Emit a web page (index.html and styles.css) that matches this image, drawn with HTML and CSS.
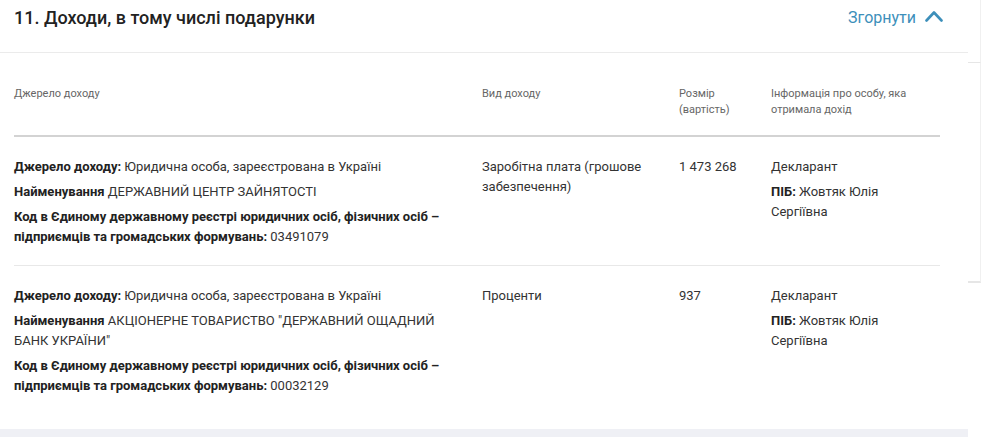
FILE: index.html
```html
<!DOCTYPE html>
<html lang="uk">
<head>
<meta charset="utf-8">
<link rel="stylesheet" href="styles.css">
</head>
<body>
<div class="page">
  <div class="main">
    <section class="card">
      <header class="card-head">
        <h2 class="title">11. Доходи, в тому числі подарунки</h2>
        <a class="toggle">Згорнути
          <svg class="chev" width="18" height="12" viewBox="0 0 18 12"><path d="M1.5 10.5 L9 2.5 L16.5 10.5" fill="none" stroke="currentColor" stroke-width="2.6" stroke-linecap="round" stroke-linejoin="round"/></svg>
        </a>
      </header>
      <div class="table">
        <div class="row thead">
          <div class="c1">Джерело доходу</div>
          <div class="c2">Вид доходу</div>
          <div class="c3">Розмір<br>(вартість)</div>
          <div class="c4">Інформація про особу, яка отримала дохід</div>
        </div>
        <div class="row tbody">
          <div class="c1">
            <p><b>Джерело доходу:</b> Юридична особа, зареєстрована в Україні</p>
            <p><b>Найменування</b> ДЕРЖАВНИЙ ЦЕНТР ЗАЙНЯТОСТІ</p>
            <p><b>Код в Єдиному державному реєстрі юридичних осіб, фізичних осіб – підприємців та громадських формувань:</b> 03491079</p>
          </div>
          <div class="c2"><p>Заробітна плата (грошове забезпечення)</p></div>
          <div class="c3"><p>1 473 268</p></div>
          <div class="c4">
            <p>Декларант</p>
            <p><b>ПІБ:</b> Жовтяк Юлія Сергіївна</p>
          </div>
        </div>
        <div class="row tbody last">
          <div class="c1">
            <p><b>Джерело доходу:</b> Юридична особа, зареєстрована в Україні</p>
            <p><b>Найменування</b> АКЦІОНЕРНЕ ТОВАРИСТВО "ДЕРЖАВНИЙ ОЩАДНИЙ БАНК УКРАЇНИ"</p>
            <p><b>Код в Єдиному державному реєстрі юридичних осіб, фізичних осіб – підприємців та громадських формувань:</b> 00032129</p>
          </div>
          <div class="c2"><p>Проценти</p></div>
          <div class="c3"><p>937</p></div>
          <div class="c4">
            <p>Декларант</p>
            <p><b>ПІБ:</b> Жовтяк Юлія Сергіївна</p>
          </div>
        </div>
      </div>
    </section>
    <div class="next"></div>
  </div>
  <aside class="side">
    <div class="side-a"></div>
    <div class="side-b"></div>
  </aside>
</div>
</body>
</html>
```
FILE: styles.css
```css
* { box-sizing: border-box; }
html, body { margin: 0; padding: 0; background: #fff; }
body {
  font-family: Roboto, "Noto Sans", Arial, sans-serif;
  color: #333;
  width: 981px;
  height: 437px;
  overflow: hidden;
}
.page { display: flex; align-items: flex-start; }
.main { width: 968px; flex: none; }
.card { background: #fff; }
.card-head {
  display: flex;
  justify-content: space-between;
  align-items: center;
  height: 53px;
  padding: 0 25px 18px 14px;
  border-bottom: 1px solid #ebebeb;
}
.title {
  margin: 0;
  font-size: 18px;
  font-weight: 500;
  color: #222;
}
.toggle {
  display: flex;
  align-items: center;
  gap: 9px;
  color: #3d8fba;
  font-size: 16px;
  cursor: pointer;
}
.chev { display: block; margin-top: -2px; }
.table {
  margin: 0 28px 0 14px;
  padding-bottom: 15px;
}
.row {
  display: grid;
  grid-template-columns: 468px 197px 92px 169px;
}
.thead {
  padding: 33px 0 17px;
  font-size: 11px;
  line-height: 16px;
  color: #666;
  border-bottom: 2px solid #d3d3d3;
}
.thead .c4 { padding-right: 20px; }
.tbody {
  padding: 20px 0 13px;
  font-size: 13px;
  line-height: 20px;
  color: #333;
  border-bottom: 1px solid #e8e8e8;
}
.tbody.last { border-bottom: none; padding-top: 20px; }
.tbody p { margin: 0 0 5px; }
.tbody .c1 { padding-right: 40px; }
.tbody .c2 { padding-right: 20px; }
.tbody .c4 { padding-right: 40px; }
.tbody b { font-weight: 700; color: #222; }
.next {
  height: 20px;
  background: #eff0f5;
}
.side { width: 13px; flex: none; }
.side-a {
  height: 63px;
  border-right: 1px solid #f0f0f0;
  border-bottom: 1px solid #e6e6e6;
}
.side-b {
  height: 220px;
  border-right: 1px solid #f0f0f0;
  border-bottom: 2px solid #e6e6e6;
}
```
